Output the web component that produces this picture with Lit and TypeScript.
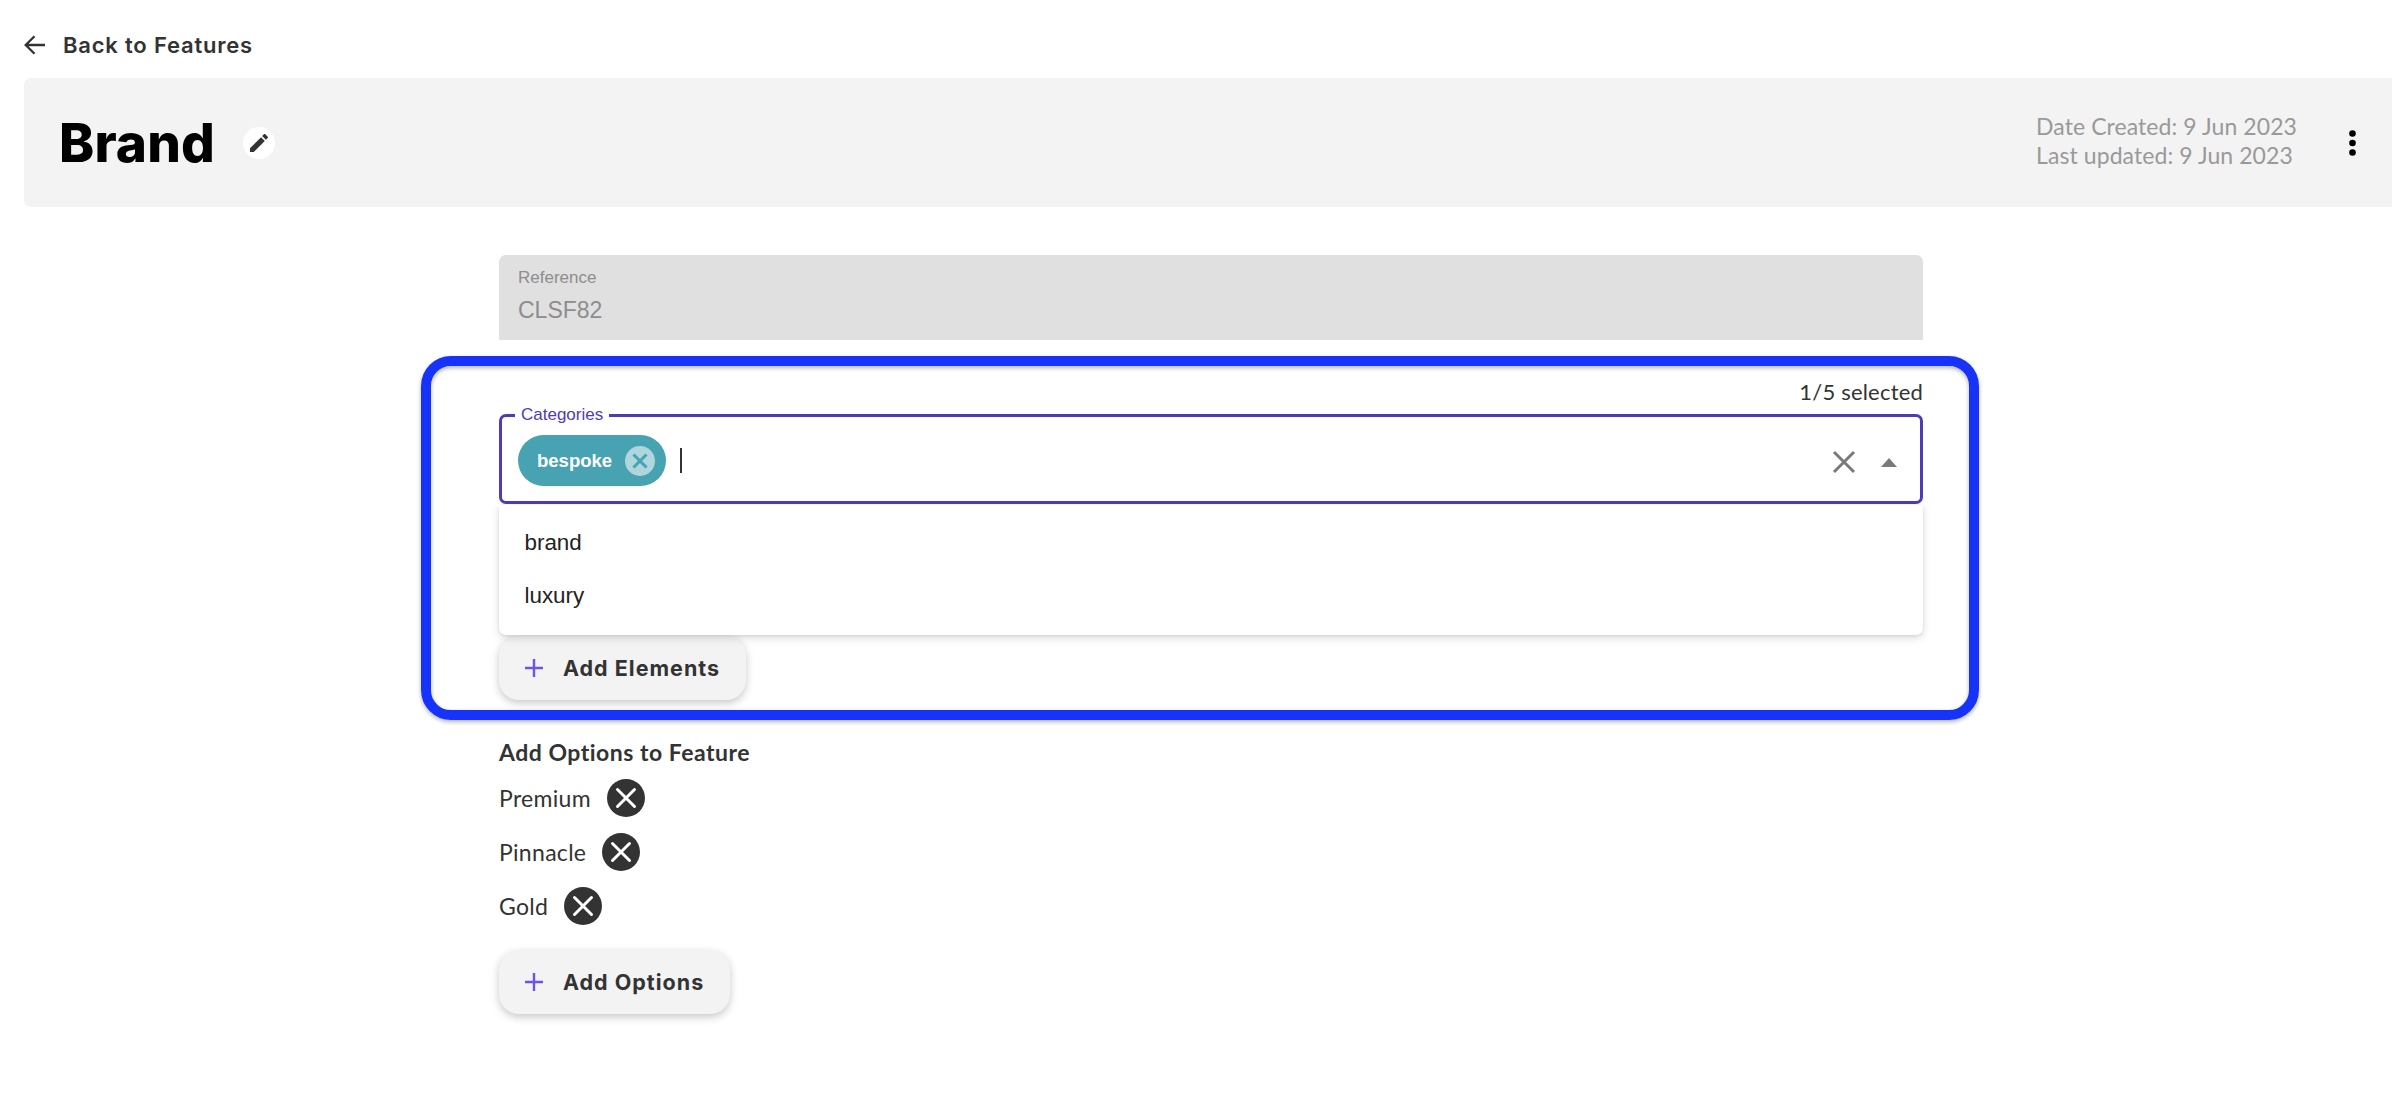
import { LitElement, html, css } from "lit";
import { customElement } from "lit/decorators.js";

const closeDark = html`<svg class="rm" viewBox="0 0 38 38"><circle cx="19" cy="19" r="19" fill="#333"/><path d="M10.5 10.5l17 17M27.5 10.5l-17 17" stroke="#fff" stroke-width="3" stroke-linecap="round"/></svg>`;
const plus = html`<svg class="plus" viewBox="0 0 20 20"><path d="M10 1v18M1 10h18" stroke="#6b52f0" stroke-width="2.4"/></svg>`;

@customElement("app-root")
export class AppRoot extends LitElement {
  static styles = css`
    :host { display: block; position: relative; width: 2392px; height: 1098px; overflow: hidden; background: #fff; font-family: "Lato", sans-serif; color: #333; }
    .page { padding-left: 24px; }
    .back { height: 78px; display: flex; align-items: center; gap: 18px; padding-top: 12px; box-sizing: border-box; }
    .back svg { width: 21px; height: 20px; flex: none; }
    .back span { font: 600 22px "Inter", sans-serif; letter-spacing: 0.8px; color: #333; white-space: nowrap; }
    .head { height: 129px; background: #f3f3f3; border-radius: 7px 0 0 7px; display: flex; align-items: center; padding: 0 36px 0 35px; }
    .head h1 { margin: 0; font: 800 53px "Inter", sans-serif; letter-spacing: 0.2px; color: #000; }
    .edit { width: 32px; height: 32px; border-radius: 50%; background: #fff; display: flex; align-items: center; justify-content: center; margin-left: 28px; }
    .edit svg { width: 24px; height: 24px; }
    .dates { margin-left: auto; margin-top: -3px; font-size: 23px; line-height: 29px; color: #999; letter-spacing: 0.08px; white-space: nowrap; }
    .dots { width: 7px; height: 26px; margin-left: 52px; display: block; }
    .content { width: 1424px; margin-left: 475px; padding-top: 48px; }
    .ref { height: 85px; box-sizing: border-box; background: #e0e0e0; border-radius: 7px 7px 0 0; padding: 13px 19px; font-family: "Liberation Sans", sans-serif; color: #8d8d8d; }
    .ref label { display: block; font-size: 17px; line-height: 20px; }
    .ref div { font-size: 23px; line-height: 28px; margin-top: 8px; }
    .count { height: 75px; padding-top: 37px; box-sizing: border-box; text-align: right; font-size: 22px; line-height: 30px; color: #333; letter-spacing: .2px; }
    fieldset { margin: -6px 0 0; height: 95px; box-sizing: border-box; border: 3px solid #503bb5; border-radius: 7px; padding: 0 0 0 16px; display: flex; align-items: center; min-width: 0; }
    legend { padding: 0 6px; margin-left: -3px; font: 17px/12px "Liberation Sans", sans-serif; color: #503bb5; height: 12px; }
    .field { display: flex; align-items: center; width: 100%; margin-top: -1px; }
    .chip { height: 51px; width: 148px; box-sizing: border-box; border-radius: 26px; background: #47a2b1; display: flex; align-items: center; padding-left: 19px; color: #fff; font: bold 18.5px "Liberation Sans", sans-serif; flex: none; }
    .chip svg { width: 30px; height: 30px; margin-left: auto; margin-right: 11px; }
    .caret { width: 2px; height: 25px; background: #333; margin-left: 14px; }
    .ctl { margin-left: auto; display: flex; align-items: center; padding: 3px 23px 0 0; }
    .ctl svg.x { width: 24px; height: 24px; }
    .ctl svg.up { width: 16px; height: 9px; margin-left: 25px; }
    .menu { height: 130px; margin-top: 1px; box-sizing: border-box; padding: 11px 25.5px; background: #fff; border-radius: 0 0 7px 7px; box-shadow: 0 3px 8px rgba(0,0,0,.14), 0 1px 3px rgba(0,0,0,.08); font: 22.4px/53px "Liberation Sans", sans-serif; color: #222; position: relative; }
    .btn { display: flex; align-items: center; box-sizing: border-box; height: 64px; padding: 0 26px; background: #f3f3f3; border-radius: 20px; box-shadow: 0 3px 8px rgba(0,0,0,.22); gap: 19px; font: 700 21.5px "Inter", sans-serif; letter-spacing: 1px; color: #333; white-space: nowrap; }
    .plus { width: 20px; height: 20px; margin-left: -1px; flex: none; }
    .b1 { width: 247px; margin-top: 1px; }
    .b2 { width: 231px; margin-top: 17px; }
    h2 { margin: 36px 0 0; font-size: 23px; font-weight: 700; line-height: 32px; color: #333; letter-spacing: .5px; }
    .opts { margin-top: 3px; }
    .opt { height: 54px; display: flex; align-items: center; gap: 16px; font-size: 23px; color: #333; letter-spacing: .3px; }
    .rm { width: 38px; height: 38px; }
    .mark { position: absolute; left: 421px; top: 356px; width: 1558px; height: 364px; box-sizing: border-box; border: 10px solid #1733fa; border-radius: 30px; pointer-events: none; box-shadow: 0 2px 4px rgba(0,0,0,.3), inset 0 2px 4px rgba(0,0,0,.3); }
  `;
  render() {
    return html`
      <div class="page">
        <div class="back">
          <svg viewBox="0 0 21 20"><path d="M21 10H2M10.5 1.2L1.7 10l8.8 8.8" fill="none" stroke="#333" stroke-width="2.3"/></svg>
          <span>Back to Features</span>
        </div>
        <div class="head">
          <h1>Brand</h1>
          <div class="edit"><svg viewBox="0 0 24 24"><path fill="#333" d="M3 17.25V21h3.75L17.81 9.94l-3.75-3.75L3 17.25zM20.71 7.04c.39-.39.39-1.02 0-1.41l-2.34-2.34c-.39-.39-1.02-.39-1.41 0l-1.83 1.83 3.75 3.75 1.83-1.83z"/></svg></div>
          <div class="dates"><div>Date Created: 9 Jun 2023</div><div>Last updated: 9 Jun 2023</div></div>
          <svg class="dots" viewBox="0 0 7 26"><circle cx="3.5" cy="3.5" r="3.3"/><circle cx="3.5" cy="13" r="3.3"/><circle cx="3.5" cy="22.5" r="3.3"/></svg>
        </div>
        <div class="content">
          <div class="ref"><label>Reference</label><div>CLSF82</div></div>
          <div class="count">1/5 selected</div>
          <fieldset>
            <legend>Categories</legend>
            <div class="field">
              <div class="chip">bespoke<svg viewBox="0 0 30 30"><circle cx="15" cy="15" r="15" fill="#b0d6dd"/><path d="M8.5 8.5l13 13M21.5 8.5l-13 13" stroke="#47a2b1" stroke-width="3"/></svg></div>
              <div class="caret"></div>
              <div class="ctl">
                <svg class="x" viewBox="0 0 24 24"><path d="M2 2l20 20M22 2L2 22" stroke="#7a7a7a" stroke-width="3"/></svg>
                <svg class="up" viewBox="0 0 16 9"><path d="M8 0l8 9H0z" fill="#7a7a7a"/></svg>
              </div>
            </div>
          </fieldset>
          <div class="menu"><div>brand</div><div>luxury</div></div>
          <div class="btn b1">${plus}<span>Add Elements</span></div>
          <h2>Add Options to Feature</h2>
          <div class="opts">
            <div class="opt"><span>Premium</span>${closeDark}</div>
            <div class="opt"><span>Pinnacle</span>${closeDark}</div>
            <div class="opt"><span>Gold</span>${closeDark}</div>
          </div>
          <div class="btn b2">${plus}<span>Add Options</span></div>
        </div>
      </div>
      <div class="mark"></div>
    `;
  }
}
